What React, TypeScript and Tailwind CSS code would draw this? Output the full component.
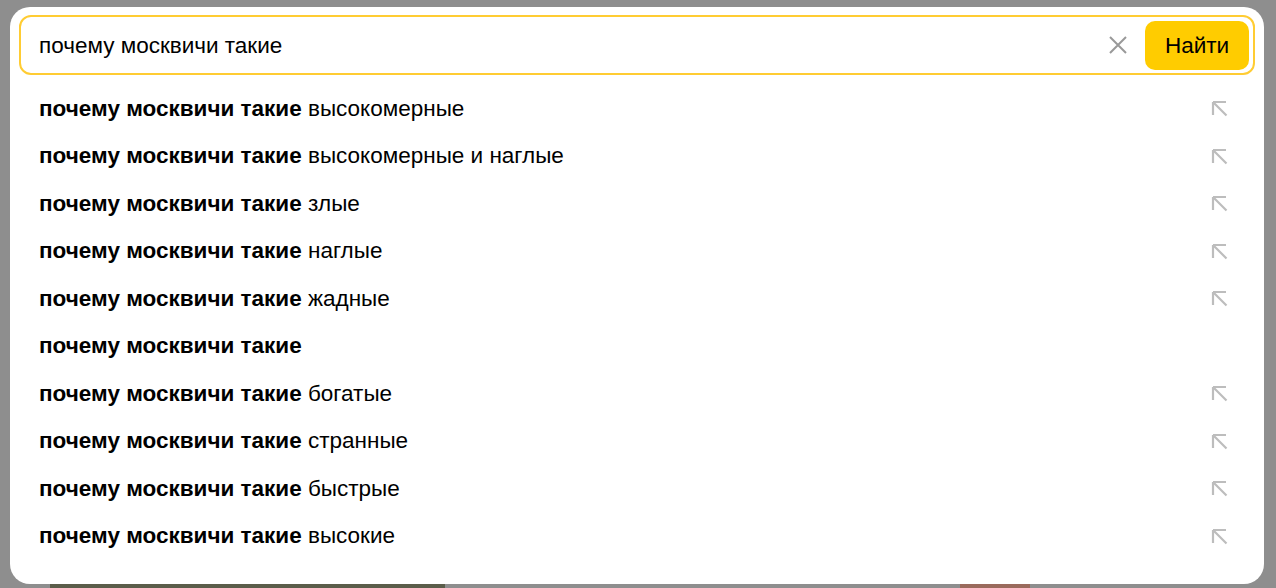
import React from "react";

const SUGGESTIONS: { rest: string; arrow: boolean }[] = [
  { rest: "высокомерные", arrow: true },
  { rest: "высокомерные и наглые", arrow: true },
  { rest: "злые", arrow: true },
  { rest: "наглые", arrow: true },
  { rest: "жадные", arrow: true },
  { rest: "", arrow: false },
  { rest: "богатые", arrow: true },
  { rest: "странные", arrow: true },
  { rest: "быстрые", arrow: true },
  { rest: "высокие", arrow: true },
];

const QUERY = "почему москвичи такие";

const ArrowUpLeft = () => (
  <svg width="17" height="17" viewBox="0 0 17 17" fill="none">
    <path
      d="M2 2h13M2 2v13M2 2l13.5 13.5"
      stroke="#bdbdbd"
      strokeWidth="2.2"
    />
  </svg>
);

const ClearIcon = () => (
  <svg width="20" height="20" viewBox="0 0 20 20" fill="none">
    <path d="M2 2l16 16M18 2L2 18" stroke="#999" strokeWidth="2" />
  </svg>
);

const App = () => {
  return (
    <div className="w-[1276px] h-[588px] bg-[#8e8e8e] overflow-hidden font-['Liberation_Sans',Arial,sans-serif]">
      <div className="pt-[7px] pl-[10px]">
        <div className="w-[1254px] h-[577px] bg-white rounded-[20px] px-[9px] pt-[8px]">
          {/* search field */}
          <div className="h-[60px] border-2 border-[#fc3] rounded-[12px] flex items-center pl-[18px] pr-[4px]">
            <div className="flex-1 pt-[2px] text-[22.5px] text-black leading-none">{QUERY}</div>
            <div className="mr-[17px] flex items-center">
              <ClearIcon />
            </div>
            <button className="h-[49px] w-[104px] pt-[2px] bg-[#fc0] rounded-[10px] text-[22.5px] text-black">
              Найти
            </button>
          </div>

          {/* suggestions */}
          <div className="mt-[10px] flex flex-col">
            {SUGGESTIONS.map((s, i) => (
              <div
                key={i}
                className="h-[47.5px] flex items-center pl-[20px] pr-[27px] text-[22.5px] text-black"
              >
                <div className="flex-1">
                  <span className="font-bold">{QUERY}</span>
                  {s.rest && <span> {s.rest}</span>}
                </div>
                {s.arrow && <ArrowUpLeft />}
              </div>
            ))}
          </div>
        </div>
        {/* page content peeking below the popup */}
        <div className="flex h-[4px]">
          <div className="ml-[40px] w-[395px] bg-[#5b5d4a]" />
          <div className="ml-[515px] w-[70px] bg-[#9a6a5c]" />
        </div>
      </div>
    </div>
  );
};

export default App;
